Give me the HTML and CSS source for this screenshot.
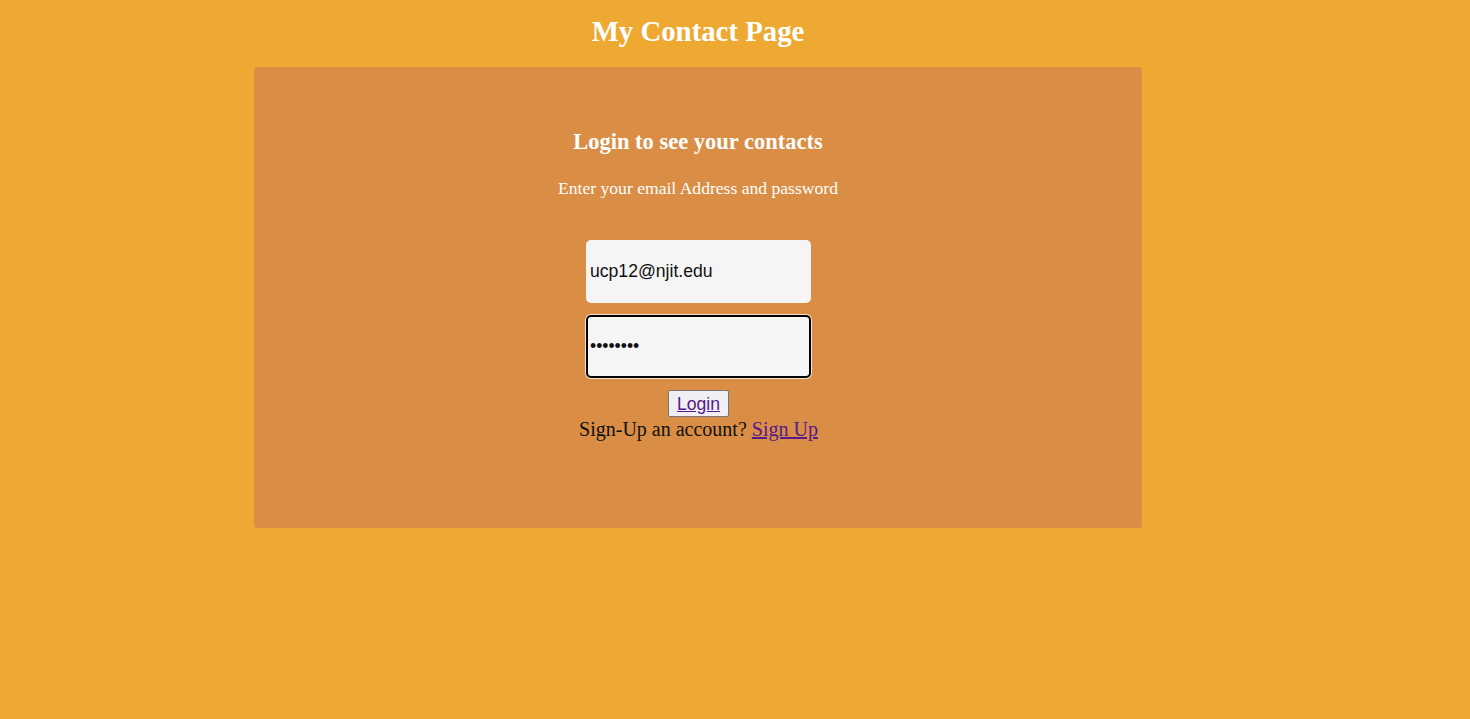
FILE: index.html
```html
<!DOCTYPE html>
<html>
<head>
<meta charset="utf-8">
<title>My Contact Page</title>
<link rel="stylesheet" href="styles.css">
</head>
<body>
<div class="wrap">
  <h1 class="title">My Contact Page</h1>
  <div class="card">
    <h3 class="sub">Login to see your contacts</h3>
    <p class="hint">Enter your email Address and password</p>
    <form class="form">
      <input class="field" type="text" value="ucp12@njit.edu">
      <input class="field focus" type="password" value="password">
      <button class="btn" type="button"><a href="#" class="btn-link">Login</a></button>
      <div class="signup">Sign-Up an account? <a href="#" class="link">Sign Up</a></div>
    </form>
  </div>
</div>
</body>
</html>
```

FILE: styles.css
```css
html, body {
  margin: 0;
  padding: 0;
  background: #eda932;
  font-family: "Liberation Serif", "Times New Roman", serif;
}
.wrap {
  width: 888px;
  margin-left: 254px;
  display: flex;
  flex-direction: column;
}
.title {
  margin: 0;
  padding-top: 14px;
  height: 67px;
  box-sizing: border-box;
  text-align: center;
  color: #ffffff;
  font-size: 28.8px;
  font-weight: bold;
  line-height: 34px;
}
.card {
  background: #da8d45;
  border-radius: 3px;
  height: 461px;
  display: flex;
  flex-direction: column;
  align-items: center;
}
.sub {
  margin: 61px 0 0;
  color: #fff;
  font-size: 22.5px;
  line-height: 28px;
  font-weight: bold;
}
.hint {
  margin: 21px 0 0;
  color: #fff;
  font-size: 17.6px;
  line-height: 22px;
}
.form {
  margin-top: 41px;
  padding-left: 1px;
  display: flex;
  flex-direction: column;
  align-items: center;
}
.field {
  width: 225px;
  height: 63px;
  box-sizing: border-box;
  background: #f5f5f5;
  border: 2px solid transparent;
  border-radius: 5px;
  padding: 0 2px;
  font-family: "Liberation Sans", Arial, sans-serif;
  font-size: 17.6px;
  color: #111;
  margin-bottom: 12px;
  outline: none;
}
.field.focus {
  border-color: #000;
  box-shadow: 0 0 0 1px #f5e6d3;
}
.btn {
  margin-top: 0;
  height: 27px;
  width: 61px;
  padding: 0 0 0;
  background: #efeff4;
  border: 1px solid #767676;
  border-radius: 2px;
  font-family: "Liberation Sans", Arial, sans-serif;
  font-size: 17.6px;
  line-height: 27px;
}
.btn-link {
  color: #551a8b;
  text-decoration: underline;
}
.signup {
  font-size: 20px;
  line-height: 24px;
  color: #111;
}
.link {
  color: #551a8b;
}
```
